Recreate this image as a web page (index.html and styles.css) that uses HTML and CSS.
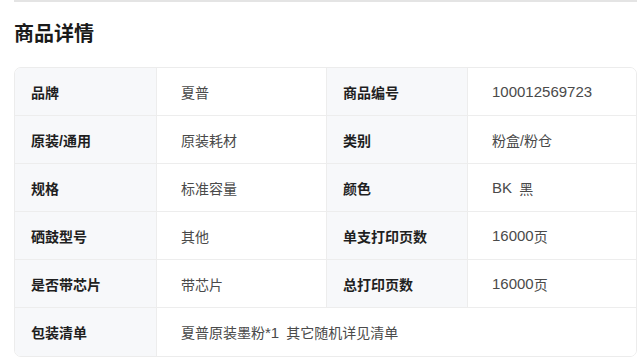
FILE: index.html
```html
<!DOCTYPE html>
<html lang="zh-CN">
<head>
<meta charset="utf-8">
<link rel="stylesheet" href="styles.css">
</head>
<body>
<div class="page">
  <div class="divider"></div>
  <h2 class="title">商品详情</h2>
  <div class="specs">
    <div class="cell label">品牌</div>
    <div class="cell value">夏普</div>
    <div class="cell label">商品编号</div>
    <div class="cell value last-col"><span class="latin">100012569723</span></div>

    <div class="cell label">原装/通用</div>
    <div class="cell value">原装耗材</div>
    <div class="cell label">类别</div>
    <div class="cell value last-col">粉盒/粉仓</div>

    <div class="cell label">规格</div>
    <div class="cell value">标准容量</div>
    <div class="cell label">颜色</div>
    <div class="cell value last-col"><span class="latin">BK </span>黑</div>

    <div class="cell label">硒鼓型号</div>
    <div class="cell value">其他</div>
    <div class="cell label">单支打印页数</div>
    <div class="cell value last-col"><span class="latin">16000</span>页</div>

    <div class="cell label">是否带芯片</div>
    <div class="cell value">带芯片</div>
    <div class="cell label">总打印页数</div>
    <div class="cell value last-col"><span class="latin">16000</span>页</div>

    <div class="cell label last-row">包装清单</div>
    <div class="cell value wide last-row last-col">夏普原装墨粉<span class="latin">*1 </span>其它随机详见清单</div>
  </div>
</div>
</body>
</html>
```

FILE: styles.css
```css
* { box-sizing: border-box; }
html, body {
  margin: 0;
  padding: 0;
  background: #ffffff;
}
body {
  font-family: "Liberation Sans", "Noto Sans CJK SC", sans-serif;
  color: #222;
}
.page {
  width: 623px;
  margin-left: 14px;
}
.divider {
  height: 2px;
  background: #e4e4e4;
}
.title {
  margin: 18px 0 19px 0;
  font-size: 20px;
  line-height: 28px;
  font-weight: 600;
  color: #1a1a1a;
}
.specs {
  display: grid;
  grid-template-columns: 142px 170px 141px 1fr;
  grid-auto-rows: 48px;
  border: 1px solid #ececec;
  border-radius: 7px;
  overflow: hidden;
}
.cell {
  display: flex;
  align-items: center;
  font-size: 14px;
  border-bottom: 1px solid #ededed;
  border-right: 1px solid #ededed;
  white-space: pre;
}
.cell.last-col { border-right: none; }
.cell.last-row { border-bottom: none; }
.label {
  background: #f7f8fa;
  padding-left: 16px;
  font-weight: 600;
  color: #1f1f1f;
}
.value {
  background: #ffffff;
  padding-left: 24px;
  color: #4a4a4a;
}
.latin {
  font-size: 15px;
  word-spacing: 3px;
}
.wide {
  grid-column: span 3;
}
```
